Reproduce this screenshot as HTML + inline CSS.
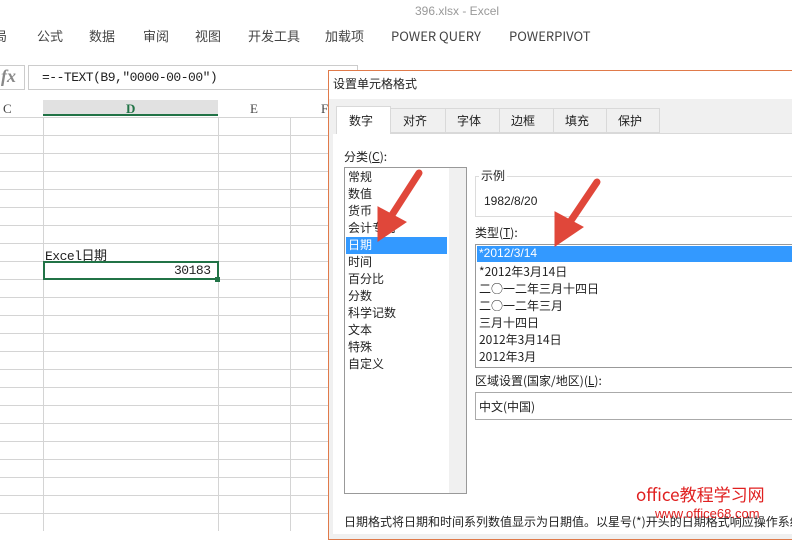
<!DOCTYPE html>
<html><head><meta charset="utf-8"><style>
*{margin:0;padding:0;box-sizing:border-box}
body{width:792px;height:531px;overflow:hidden;position:relative;background:#fff;font-family:"Liberation Sans","Noto Sans CJK SC",sans-serif;font-size:12px;color:#222}
.a{position:absolute;white-space:nowrap}
.cjk{font-family:"Noto Sans CJK SC",sans-serif}
.ser{font-family:"Liberation Serif","Noto Serif CJK SC",serif}
.mono{font-family:"Liberation Mono","Noto Sans CJK SC",monospace}
.hl{position:absolute;left:0;width:330px;height:1px;background:#d4d4d4}
.vl{position:absolute;top:117px;bottom:0;width:1px;background:#d4d4d4}
.li{position:absolute;left:348px;font-size:12px}
.ti{position:absolute;left:479px;font-size:12px;white-space:nowrap}
span{white-space:nowrap}
</style></head><body>
<div class="a" style="left:415px;top:4px;color:#999;font-size:12px">396.xlsx - Excel</div>
<div class="a cjk" style="top:26px;left:-6px;font-size:13px;color:#444">
<span style="position:absolute;left:0">局</span>
<span style="position:absolute;left:43px">公式</span>
<span style="position:absolute;left:95px">数据</span>
<span style="position:absolute;left:149px">审阅</span>
<span style="position:absolute;left:201px">视图</span>
<span style="position:absolute;left:254px">开发工具</span>
<span style="position:absolute;left:331px">加载项</span>
<span style="position:absolute;left:397px">POWER QUERY</span>
<span style="position:absolute;left:515px">POWERPIVOT</span></div>
<div class="a" style="left:0;top:65px;width:25px;height:25px;border:1px solid #ccc;border-left:none;color:#888;font:italic bold 18px 'Liberation Serif',serif;padding-left:1px">fx</div>
<div class="a" style="left:28px;top:65px;width:330px;height:25px;border:1px solid #ccc"></div>
<div class="a mono" style="left:42px;top:70px;font-size:13px;letter-spacing:-0.5px">=--TEXT(B9,″0000-00-00″)</div>
<div class="a" style="left:43px;top:100px;width:175px;height:16px;background:#e1e1e1;border-bottom:2px solid #217346"></div>
<div class="a ser" style="left:3px;top:101px;color:#444;font-size:13px">C</div>
<div class="a ser" style="left:126px;top:101px;color:#217346;font-weight:bold;font-size:13px">D</div>
<div class="a ser" style="left:250px;top:101px;color:#444;font-size:13px">E</div>
<div class="a ser" style="left:321px;top:101px;color:#444;font-size:13px">F</div>
<div class="hl" style="top:117px"></div><div class="hl" style="top:135px"></div><div class="hl" style="top:153px"></div><div class="hl" style="top:171px"></div><div class="hl" style="top:189px"></div><div class="hl" style="top:207px"></div><div class="hl" style="top:225px"></div><div class="hl" style="top:243px"></div><div class="hl" style="top:261px"></div><div class="hl" style="top:279px"></div><div class="hl" style="top:297px"></div><div class="hl" style="top:315px"></div><div class="hl" style="top:333px"></div><div class="hl" style="top:351px"></div><div class="hl" style="top:369px"></div><div class="hl" style="top:387px"></div><div class="hl" style="top:405px"></div><div class="hl" style="top:423px"></div><div class="hl" style="top:441px"></div><div class="hl" style="top:459px"></div><div class="hl" style="top:477px"></div><div class="hl" style="top:495px"></div><div class="hl" style="top:513px"></div>
<div class="vl" style="left:43px"></div><div class="vl" style="left:218px"></div><div class="vl" style="left:290px"></div>
<div class="a mono" style="left:45px;top:245px;font-size:13px;letter-spacing:-0.5px">Excel日期</div>
<div class="a" style="left:43px;top:261px;width:176px;height:19px;border:2px solid #217346"></div>
<div class="a" style="left:215px;top:277px;width:5px;height:5px;background:#217346"></div>
<div class="a mono" style="left:174px;top:263px;font-size:13px;letter-spacing:-0.5px">30183</div>
<!-- dialog -->
<div class="a" style="left:328px;top:70px;width:470px;height:470px;border:1px solid #e07a4a;background:#f0f0f0"></div>
<div class="a" style="left:329px;top:71px;width:463px;height:28px;background:#fff"></div>
<div class="a cjk" style="left:333px;top:75px;font-size:12px">设置单元格格式</div>
<div class="a" style="left:336px;top:133px;width:456px;height:1px;background:#d9d9d9"></div>
<div class="a" style="left:390px;top:108px;width:270px;height:25px;border:1px solid #d9d9d9;border-left:none;background:#f0f0f0"></div>
<div class="a" style="left:336px;top:106px;width:55px;height:29px;background:#fff;border:1px solid #d9d9d9;border-bottom:none"></div>
<div class="a" style="left:445px;top:108px;width:1px;height:25px;background:#d9d9d9"></div>
<div class="a" style="left:499px;top:108px;width:1px;height:25px;background:#d9d9d9"></div>
<div class="a" style="left:553px;top:108px;width:1px;height:25px;background:#d9d9d9"></div>
<div class="a" style="left:606px;top:108px;width:1px;height:25px;background:#d9d9d9"></div>
<div class="a cjk" style="top:112px;left:349px">数字</div>
<div class="a cjk" style="top:112px;left:403px">对齐</div>
<div class="a cjk" style="top:112px;left:457px">字体</div>
<div class="a cjk" style="top:112px;left:511px">边框</div>
<div class="a cjk" style="top:112px;left:565px">填充</div>
<div class="a cjk" style="top:112px;left:618px">保护</div>
<div class="a" style="left:333px;top:134px;width:459px;height:400px;background:#fff"></div>
<div class="a cjk" style="left:344px;top:148px">分类(<u>C</u>):</div>
<div class="a" style="left:344px;top:167px;width:123px;height:327px;border:1px solid #999;background:#fff"></div>
<div class="a" style="left:449px;top:168px;width:17px;height:325px;background:#f0f0f0"></div>
<div class="a" style="left:346px;top:237px;width:101px;height:17px;background:#3399ff"></div>
<div class="li cjk" style="top:168px">常规</div><div class="li cjk" style="top:185px">数值</div><div class="li cjk" style="top:202px">货币</div><div class="li cjk" style="top:219px">会计专用</div><div class="li cjk" style="top:236px;color:#fff">日期</div><div class="li cjk" style="top:253px">时间</div><div class="li cjk" style="top:270px">百分比</div><div class="li cjk" style="top:287px">分数</div><div class="li cjk" style="top:304px">科学记数</div><div class="li cjk" style="top:321px">文本</div><div class="li cjk" style="top:338px">特殊</div><div class="li cjk" style="top:355px">自定义</div>
<div class="a" style="left:475px;top:176px;width:330px;height:41px;border:1px solid #dcdcdc"></div>
<div class="a cjk" style="left:479px;top:167px;background:#fff;padding:0 2px">示例</div>
<div class="a" style="left:484px;top:194px">1982/8/20</div>
<div class="a cjk" style="left:475px;top:224px">类型(<u>T</u>):</div>
<div class="a" style="left:475px;top:244px;width:330px;height:124px;border:1px solid #999"></div>
<div class="a" style="left:477px;top:246px;width:320px;height:16px;background:#3399ff"></div>
<div class="ti" style="top:246px;color:#fff">*2012/3/14</div>
<div class="ti cjk" style="top:263px">*2012年3月14日</div>
<div class="ti cjk" style="top:280px">二○一二年三月十四日</div>
<div class="ti cjk" style="top:297px">二○一二年三月</div>
<div class="ti cjk" style="top:314px">三月十四日</div>
<div class="ti cjk" style="top:331px">2012年3月14日</div>
<div class="ti cjk" style="top:348px">2012年3月</div>
<div class="a cjk" style="left:475px;top:372px">区域设置(国家/地区)(<u>L</u>):</div>
<div class="a" style="left:475px;top:392px;width:330px;height:28px;border:1px solid #aaa"></div>
<div class="a cjk" style="left:479px;top:398px">中文(中国)</div>
<div class="a cjk" style="left:344px;top:513px">日期格式将日期和时间系列数值显示为日期值。以星号(*)开头的日期格式响应操作系统</div>
<div class="a cjk" style="left:636px;top:481px;color:#e02020;font-size:17px">office教程学习网</div>
<div class="a" style="left:655px;top:506px;color:#e02020;font-size:13px">www.office68.com</div>
<svg class="a" style="left:0;top:0" width="792" height="531">
<g fill="#e0473a" stroke="#e0473a">
<line x1="419" y1="173" x2="390" y2="218" stroke-width="7" stroke-linecap="round"/>
<polygon points="378,241 378,207 406,222" stroke-width="1"/>
<line x1="597" y1="182" x2="568" y2="225" stroke-width="7" stroke-linecap="round"/>
<polygon points="555,246 555,212 583,227" stroke-width="1"/>
</g></svg>
</body></html>
